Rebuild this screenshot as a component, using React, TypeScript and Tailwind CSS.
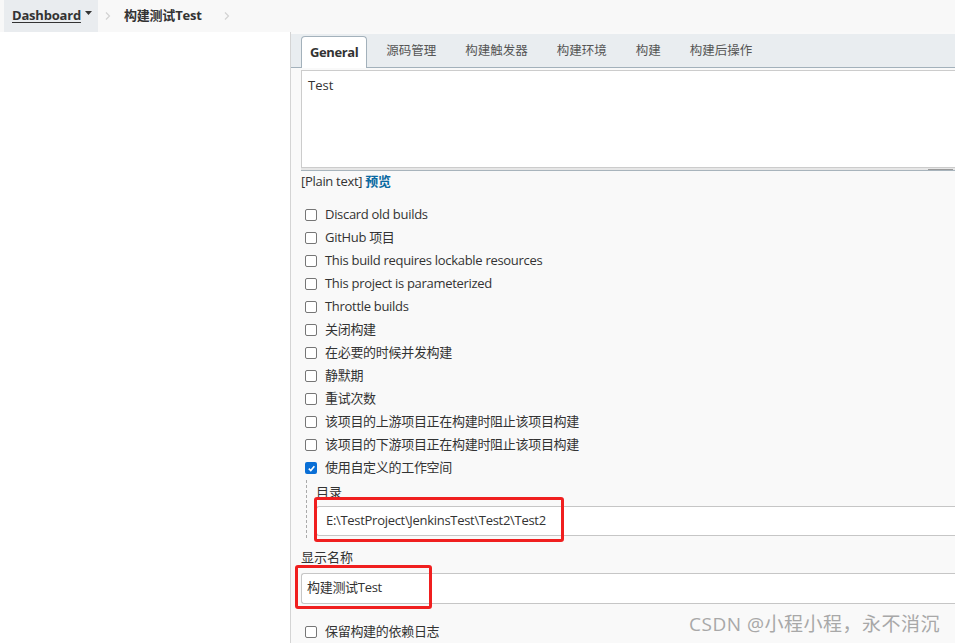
import { useState } from 'react';

const font = { fontFamily: '"Open Sans", "Noto Sans", "Noto Sans CJK SC", sans-serif' };

const options = [
  'Discard old builds',
  'GitHub 项目',
  'This build requires lockable resources',
  'This project is parameterized',
  'Throttle builds',
  '关闭构建',
  '在必要的时候并发构建',
  '静默期',
  '重试次数',
  '该项目的上游项目正在构建时阻止该项目构建',
  '该项目的下游项目正在构建时阻止该项目构建',
];

const tabs = ['源码管理', '构建触发器', '构建环境', '构建', '构建后操作'];

const Arrow = () => (
  <svg width="6" height="8" viewBox="0 0 6 8">
    <path d="M1 0.5 L4.5 4 L1 7.5" fill="none" stroke="#d2d2d2" strokeWidth="1.2" />
  </svg>
);

const Check = ({ label, checked = false }: { label: string; checked?: boolean }) => (
  <label className="flex items-center h-[23px] pl-1">
    {checked ? (
      <span className="w-[12px] h-[12px] rounded-[2px] bg-[#0a6fd6] flex items-center justify-center">
        <svg width="9" height="9" viewBox="0 0 10 10">
          <path d="M2 5.2 L4.2 7.3 L8.2 2.6" fill="none" stroke="#fff" strokeWidth="1.8" />
        </svg>
      </span>
    ) : (
      <span className="w-[12px] h-[12px] rounded-[2px] border border-[#767676] bg-white" />
    )}
    <span className="ml-[8px] text-[13px] text-[#333] tracking-[-0.3px]">{label}</span>
  </label>
);

export default function App() {
  const [name] = useState('构建测试Test');
  return (
    <div className="w-[955px] h-[643px] overflow-hidden bg-white relative" style={font}>
      {/* breadcrumb bar */}
      <div className="h-[32px] bg-[#f8f8f8] flex items-center">
        <div className="ml-[4px] h-full bg-[#e9ecef] flex items-center pl-[8px] pr-[6px]">
          <span className="text-[13px] font-bold text-[#333] underline underline-offset-2 tracking-[-0.2px]">Dashboard</span>
          <svg width="7" height="4" viewBox="0 0 7 4" className="ml-[4px] -mt-[6px]">
            <path d="M0 0 H7 L3.5 4 Z" fill="#333" />
          </svg>
        </div>
        <span className="ml-[7px]"><Arrow /></span>
        <span className="ml-[13px] text-[13px] font-bold text-[#333] tracking-[-0.2px]">构建测试Test</span>
        <span className="ml-[22px]"><Arrow /></span>
      </div>

      <div className="flex h-[611px]">
        <div className="w-[290px] shrink-0 bg-white" />
        <div className="flex-1 border-l border-[#d4d4d4] bg-[#f9f9f9] pl-[10px] pt-[2px]">
          {/* tabs */}
          <div className="h-[34px] bg-[#e9edf0] border-b border-[#a3b1bb] flex items-end -ml-[10px] pl-[10px]">
            <div className="h-[32px] px-[8px] bg-white border border-b-0 border-[#a3b1bb] rounded-t-[4px] flex items-center text-[13px] font-bold text-[#333] tracking-[-0.4px] -mb-px">
              General
            </div>
            {tabs.map((t) => (
              <div key={t} className="h-[31px] px-[10px] ml-[9px] flex items-center text-[12.5px] text-[#555]">
                {t}
              </div>
            ))}
          </div>

          {/* description */}
          <div className="mt-[2px] h-[98px] bg-white border border-[#ccc] border-r-0 px-[6px] py-[5px] text-[13px] text-[#333]">
            Test
          </div>
          <div className="h-[3px] bg-[#e6e6e6] border-b border-[#a8b4bc] flex justify-end pr-[2px]">
            <div className="w-[25px] h-px bg-[#9a9a9a] mt-px" />
          </div>
          <div className="mt-[1px] text-[13px] text-[#333] tracking-[-0.3px]">
            [Plain text] <span className="text-[#0b6aa2] font-bold">预览</span>
          </div>

          <div className="mt-[12px]">
            {options.map((o) => (
              <Check key={o} label={o} />
            ))}
            <Check label="使用自定义的工作空间" checked />
          </div>

          {/* custom workspace */}
          <div className="ml-[5px] border-l border-dashed border-[#aaa] pl-[9px] pt-[2px] pb-[2px]">
            <div className="text-[13px] text-[#333] leading-[20px]">目录</div>
            <div className="relative mt-[4px]">
              <div className="h-[30px] bg-white border border-[#c6c6c6] border-r-0 rounded-l-[3px] flex items-center pl-[9px] text-[13px] text-[#333] tracking-[-0.3px]">
                E:\TestProject\JenkinsTest\Test2\Test2
              </div>
              <div className="absolute -left-[2px] -top-[9px] w-[250px] h-[45px] border-[3px] border-[#f01f1f] rounded-[3px]" />
            </div>
          </div>

          <div className="mt-[9px] text-[13px] text-[#333] leading-[20px]">显示名称</div>
          <div className="relative mt-[6px]">
            <div className="h-[31px] bg-white border border-[#c6c6c6] border-r-0 rounded-l-[3px] flex items-center pl-[5px] text-[13px] text-[#333] tracking-[-0.3px]">
              {name}
            </div>
            <div className="absolute -left-[6px] -top-[8px] w-[137px] h-[44px] border-[3px] border-[#f01f1f] rounded-[3px]" />
          </div>

          <div className="mt-[17px]">
            <Check label="保留构建的依赖日志" />
          </div>
        </div>
      </div>

      <div className="absolute left-[689px] top-[610px] text-[19px] text-[#a8a8a8] tracking-[0.5px]" style={font}>
        CSDN @小程小程，永不消沉
      </div>
    </div>
  );
}
